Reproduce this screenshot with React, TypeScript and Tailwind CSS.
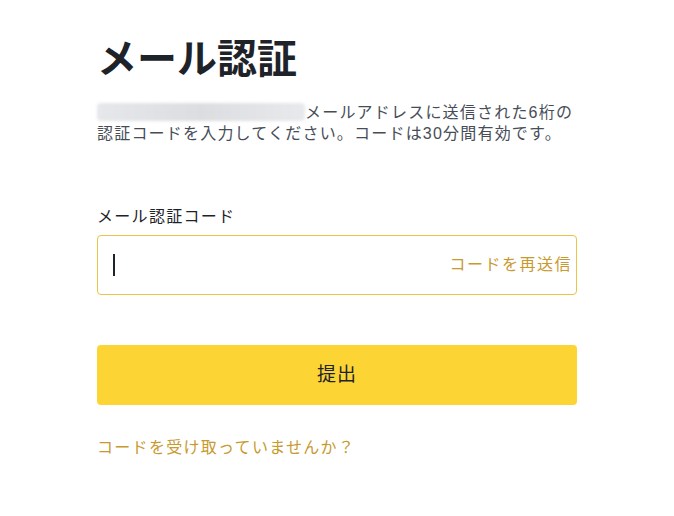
export default function App() {
  return (
    <div
      className="min-h-[516px] w-full bg-white"
      style={{ fontFamily: '"Liberation Sans", "Noto Sans CJK JP", sans-serif' }}
    >
      <div className="ml-[97px] w-[480px] pt-[33px]">
        <h1 className="text-[40px] leading-[52px] font-bold text-[#1e2329]">メール認証</h1>

        <p className="mt-[17px] text-[16px] leading-[21px] tracking-[1.2px] text-[#474d57]">
          <span className="inline-block h-[18px] w-[208px] align-[-3px] rounded-sm bg-gradient-to-r from-[#e6e7ea] via-[#dcdde0] to-[#e8e9ec] blur-[1.5px]" />
          メールアドレスに送信された6桁の認証コードを入力してください。コードは30分間有効です。
        </p>

        <label className="mt-[62px] block text-[16px] leading-[22px] tracking-[1.3px] text-[#1e2329]">
          メール認証コード
        </label>
        <div className="mt-[7px] flex h-[60px] items-center rounded-[4px] border border-[#e8c547] pl-[15px] pr-[4px]">
          <span className="h-[22px] w-[2px] bg-[#1e2329]" />
          <div className="flex-1" />
          <button className="text-[16px] tracking-[1.5px] text-[#c79a30]">コードを再送信</button>
        </div>

        <button className="mt-[50px] flex h-[60px] w-full items-center justify-center rounded-[4px] bg-[#fcd535] text-[19px] tracking-[1px] text-[#1e2329]">
          提出
        </button>

        <a className="mt-[30px] block text-[16px] leading-[26px] tracking-[1.3px] text-[#c79a30]">
          コードを受け取っていませんか？
        </a>
      </div>
    </div>
  );
}
